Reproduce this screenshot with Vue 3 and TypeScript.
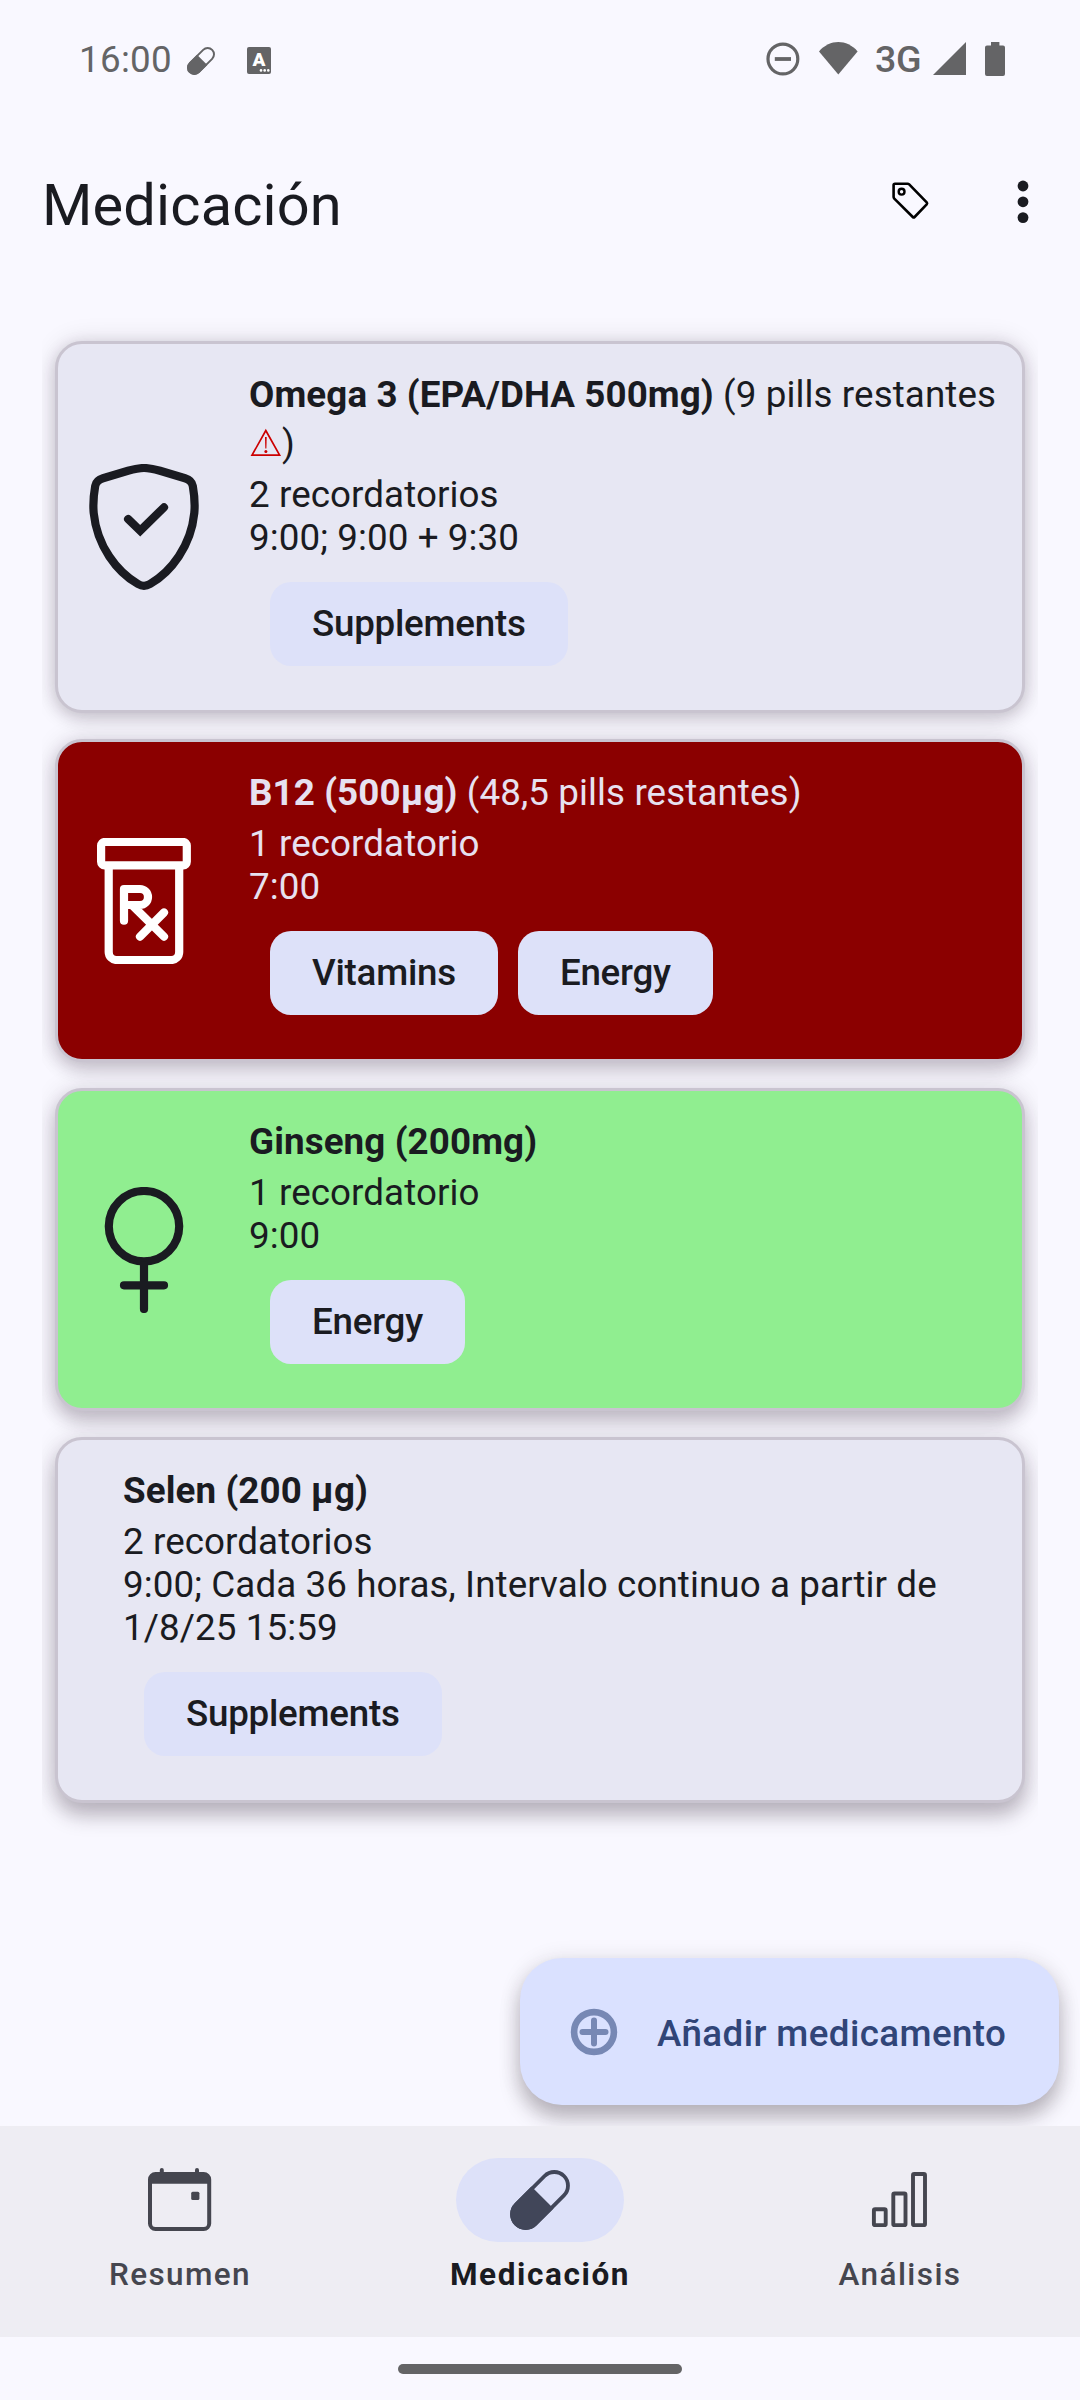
<script setup lang="ts">
type IconName = 'shield' | 'rx' | 'female'

interface Medicine {
  name: string
  stock?: string
  low?: boolean
  lines: string[]
  tags: string[]
  icon?: IconName
  theme: 'plain' | 'red' | 'green'
}

const medicines: Medicine[] = [
  {
    name: 'Omega 3 (EPA/DHA 500mg)',
    stock: '9 pills restantes',
    low: true,
    lines: ['2 recordatorios', '9:00; 9:00 + 9:30'],
    tags: ['Supplements'],
    icon: 'shield',
    theme: 'plain',
  },
  {
    name: 'B12 (500µg)',
    stock: '48,5 pills restantes',
    lines: ['1 recordatorio', '7:00'],
    tags: ['Vitamins', 'Energy'],
    icon: 'rx',
    theme: 'red',
  },
  {
    name: 'Ginseng (200mg)',
    lines: ['1 recordatorio', '9:00'],
    tags: ['Energy'],
    icon: 'female',
    theme: 'green',
  },
  {
    name: 'Selen (200 µg)',
    lines: ['2 recordatorios', '9:00; Cada 36 horas, Intervalo continuo a partir de 1/8/25 15:59'],
    tags: ['Supplements'],
    theme: 'plain',
  },
]
</script>

<template>
  <div class="screen">
    <header class="status">
      <span class="clock">16:00</span>
      <svg class="s-pill" width="28" height="28" viewBox="0 0 60 60">
        <g transform="rotate(-45 30 30)">
          <rect x="-3.8" y="16.4" width="67.6" height="27.2" rx="13.6" fill="none" stroke="#646466" stroke-width="4.2" />
          <path d="M33.5 14.4H9.8a15.6 15.6 0 0 0 0 31.2H33.5Z" fill="#646466" />
        </g>
      </svg>
      <span class="s-lang">
        <b>A</b>
        <svg width="24" height="27" viewBox="0 0 24 27" fill="#fff">
          <circle cx="14" cy="23.4" r="1.3" /><circle cx="17.7" cy="23.4" r="1.3" /><circle cx="21.3" cy="23.4" r="1.3" />
        </svg>
      </span>
      <span class="grow"></span>
      <div class="s-right">
        <svg width="96" height="36" viewBox="764 41 96 36">
          <circle cx="782.9" cy="59" r="14.9" fill="none" stroke="#646466" stroke-width="3.2" />
          <path d="M774.8 59H791" stroke="#646466" stroke-width="3.8" />
          <path d="M838.3 74.6L819 51.4C830 39 846.6 39 857.6 51.4Z" fill="#646466" />
        </svg>
        <span class="net">3G</span>
        <svg width="74" height="36" viewBox="932 41 74 36" fill="#646466">
          <path d="M966 42V75H933Z" />
          <path d="M991 42h8.4v3.6h3.6a2 2 0 0 1 2 2V74a2 2 0 0 1-2 2H987a2 2 0 0 1-2-2V47.6a2 2 0 0 1 2-2h4Z" />
        </svg>
      </div>
    </header>

    <div class="appbar">
      <h1>Medicación</h1>
      <svg class="tag-ico" width="40" height="40" viewBox="892 181 40 40" fill="none" stroke="#000">
        <path d="M896 183.7H908.5Q909.5 183.7 910.2 184.4L927.7 202.4Q928.6 203.4 927.7 204.4L915.6 217Q914.7 217.9 913.8 217L895.3 198.6Q894.6 197.9 894.6 197V185.1Q894.6 183.7 896 183.7Z" stroke-width="2.6" />
        <circle cx="902.6" cy="191.7" r="2.9" stroke-width="2.4" />
      </svg>
      <svg class="dots" width="12" height="44" viewBox="0 0 12 44" fill="#1a1b21">
        <circle cx="6" cy="6" r="5.4" /><circle cx="6" cy="21.8" r="5.4" /><circle cx="6" cy="37.6" r="5.4" />
      </svg>
    </div>

    <main class="list">
      <article v-for="(m, i) in medicines" :key="i" class="card" :class="[m.theme, 'lift' + i]">
        <svg v-if="m.icon" class="m-ico" width="126" height="126" viewBox="0 0 126 126" fill="none" stroke="currentColor" stroke-width="8.2" stroke-linecap="round" stroke-linejoin="round">
          <template v-if="m.icon === 'shield'">
            <path d="M63 4C58 4 52 5.4 47 6.8L22 14.3C17 15.8 15 18 14.2 22C12.6 31 11.9 40 12.7 49C16 82 36 108 57 120C61 122.4 65 122.4 69 120C90 108 110 82 113.3 49C114.1 40 113.4 31 111.8 22C111 18 109 15.8 104 14.3L79 6.8C74 5.4 68 4 63 4Z" />
            <path d="M47.1 55L59.2 66.7L83 43.3" stroke-linejoin="miter" />
          </template>
          <template v-else-if="m.icon === 'rx'">
            <rect x="20.1" y="4" width="85.7" height="23.3" rx="3.5" />
            <path d="M27.7 28V114a8 8 0 0 0 8 8H90.2a8 8 0 0 0 8-8V28" />
            <path d="M43 82.7V51H59a8 8 0 0 1 0 16H43M52 68L83 98.7M83 74.5L59 98.7" />
          </template>
          <template v-else>
            <circle cx="63" cy="39.2" r="35.2" />
            <path d="M63 78V122M43 98.3H83" />
          </template>
        </svg>
        <div class="body">
          <p class="name"><b>{{ m.name }}</b><template v-if="m.stock"> ({{ m.stock }}<template v-if="m.low">&#32;<svg class="warn" width="33" height="30" viewBox="0 0 33 30"><path d="M16.8 3.5L30.6 28.2H3Z" fill="none" stroke="#c00" stroke-width="1.7" /><path d="M16 10h1.7l-.3 11.5h-1.1Z" fill="#c00" /><circle cx="16.85" cy="24.5" r="1.5" fill="#c00" /></svg></template>)</template></p>
          <p v-for="l in m.lines" :key="l" class="line">{{ l }}</p>
          <div class="chips">
            <span v-for="t in m.tags" :key="t" class="chip">{{ t }}</span>
          </div>
        </div>
      </article>
    </main>

    <button class="fab" type="button">
      <svg width="48" height="48" viewBox="0 0 48 48" fill="none" stroke="#7788b4" stroke-width="6.6">
        <circle cx="24" cy="24" r="19.9" />
        <path d="M24 12.500V35.500M12.500 24H35.500" stroke-width="6" stroke-linecap="round" />
      </svg>
      <span>Añadir medicamento</span>
    </button>

    <nav class="nav">
      <a class="tab">
        <span class="ind">
          <svg width="64" height="64" viewBox="148 2168 64 64" fill="none" stroke="#45464f">
            <rect x="150" y="2174" width="59.2" height="55" rx="5.5" stroke-width="4" />
            <path d="M149 2183.7V2179a6 6 0 0 1 6-6H204a6 6 0 0 1 6 6V2183.7Z" fill="#45464f" stroke="none" />
            <path d="M161.8 2170V2175M197 2170V2175" stroke-width="4" stroke-linecap="round" />
            <rect x="191.2" y="2191.7" width="8.2" height="8.2" rx="1.5" fill="#45464f" stroke="none" />
          </svg>
        </span>
        <span class="lbl">Resumen</span>
      </a>
      <a class="tab on">
        <span class="ind">
          <svg width="60" height="60" viewBox="0 0 60 60">
            <g transform="rotate(-45 30 30)">
              <rect x="-3.9" y="16.3" width="67.8" height="27.4" rx="13.7" fill="none" stroke="#414659" stroke-width="3.8" />
              <path d="M33.5 14.4H9.8a15.6 15.6 0 0 0 0 31.2H33.5Z" fill="#414659" />
            </g>
          </svg>
        </span>
        <span class="lbl">Medicación</span>
      </a>
      <a class="tab">
        <span class="ind">
          <svg width="64" height="64" viewBox="868 2168 64 64" fill="none" stroke="#45464f" stroke-width="3.9">
            <rect x="873.9" y="2209.3" width="11.8" height="15.8" rx="1.2" />
            <rect x="893.3" y="2193.5" width="12.2" height="31.6" rx="1.2" />
            <rect x="913" y="2174" width="12" height="51.1" rx="1.2" />
          </svg>
        </span>
        <span class="lbl">Análisis</span>
      </a>
    </nav>
    <footer class="gesture"><i></i></footer>
  </div>
</template>

<style>
body {
  margin: 0;
  background: #f9f8ff;
}
</style>

<style scoped>
.screen {
  position: relative;
  width: 1080px;
  height: 2400px;
  display: flex;
  flex-direction: column;
  overflow: hidden;
  background: #f9f8ff;
  color: #1a1b21;
  font-family: Roboto, "Liberation Sans", sans-serif;
  font-size: 36.75px;
}
.status {
  height: 118px;
  box-sizing: border-box;
  padding: 0 74px 0 79px;
  display: flex;
  align-items: center;
}
.clock {
  width: 108px;
  color: #646466;
  letter-spacing: .3px;
}
.s-pill {
  margin-top: 3px;
}
.s-lang {
  position: relative;
  width: 24px;
  height: 27px;
  margin: 3px 0 0 32px;
  border-radius: 2px;
  background: #646466;
}
.s-lang b {
  position: absolute;
  left: 0;
  top: 0;
  width: 24px;
  text-align: center;
  font-size: 19px;
  line-height: 26px;
  font-weight: 900;
  color: #fff;
}
.s-lang svg {
  position: absolute;
  left: 0;
  top: 0;
}
.grow {
  flex: 1;
}
.s-right {
  display: flex;
  align-items: center;
}
.net {
  width: 57px;
  margin: 0 0 0 15px;
  line-height: 44px;
  font-size: 37.5px;
  font-weight: 500;
  letter-spacing: -.3px;
  color: #646466;
}
.appbar {
  height: 172px;
  box-sizing: border-box;
  padding: 0 51px 0 42px;
  display: flex;
  align-items: center;
}
h1 {
  margin: 2px 0 0;
  flex: 1;
  font-size: 57.75px;
  line-height: 72px;
  font-weight: 400;
  letter-spacing: .15px;
}
.tag-ico {
  margin: -6px 86px 0 0;
}
.dots {
  margin-top: -5px;
}
.list {
  margin: 0 42px;
  padding: 51px 13.5px 0;
  display: flex;
  flex-direction: column;
  gap: 26px;
  clip-path: inset(-50px 0 -60px 0);
}
.card {
  box-sizing: border-box;
  display: flex;
  align-items: center;
  margin-left: -.5px;
  border: 3px solid #c9c4d0;
  border-radius: 27px;
  background: #e7e7f3;
  padding: 26px 18px 44px 23px;
}
.lift0 { box-shadow: 0 5px 16px rgba(40, 25, 45, .2), 0 0 26px rgba(40, 25, 45, .12); }
.lift1 { box-shadow: 0 7px 17px rgba(40, 25, 45, .22), 0 0 26px rgba(40, 25, 45, .12); }
.lift2 { box-shadow: 0 10px 18px rgba(40, 25, 45, .24), 0 0 26px rgba(40, 25, 45, .12); }
.lift3 { box-shadow: 0 13px 20px rgba(40, 25, 45, .27), 0 0 26px rgba(40, 25, 45, .12); }
.red {
  background: #8b0000;
  color: #e7e1f0;
}
.red .m-ico {
  color: #fff;
}
.green {
  background: #90ee90;
}
.m-ico {
  flex: none;
  margin: 18px 42px 0 0;
}
.body {
  flex: 1;
  margin-left: 42px;
}
.m-ico + .body {
  margin-left: 0;
}
p {
  margin: 0;
}
.name {
  line-height: 49px;
  padding-bottom: 5px;
  letter-spacing: .1px;
}
.line {
  line-height: 43px;
  letter-spacing: .09px;
}
.warn {
  vertical-align: -1px;
}
.chips {
  display: flex;
  gap: 20px;
  margin: 23px 0 0 21px;
}
.chip {
  height: 84px;
  line-height: 84px;
  padding: 0 42px;
  border-radius: 21px;
  background: #dde1f9;
  color: #1a1b21;
  font-weight: 500;
  letter-spacing: -.25px;
}
.fab {
  position: absolute;
  left: 519.5px;
  top: 1958px;
  width: 539.5px;
  height: 147px;
  box-sizing: border-box;
  padding: 4px 0 0 50px;
  display: flex;
  align-items: center;
  gap: 39.5px;
  border: 0;
  border-radius: 42px;
  background: #dae1ff;
  color: #304578;
  font: 500 36.75px Roboto, sans-serif;
  letter-spacing: .4px;
  white-space: nowrap;
  box-shadow: 0 14px 20px rgba(40, 30, 40, .27), 0 2px 22px rgba(40, 30, 40, .12);
}
.fab svg {
  margin-top: -4px;
}
.nav {
  position: relative;
  margin-top: auto;
  height: 211px;
  display: flex;
  background: #eeedf3;
}
.tab {
  flex: 1;
  display: flex;
  flex-direction: column;
  align-items: center;
  padding-top: 32px;
  color: #45464f;
}
.ind {
  width: 168px;
  height: 84px;
  display: flex;
  align-items: center;
  justify-content: center;
  border-radius: 42px;
}
.on .ind {
  background: #dde1f9;
}
.lbl {
  margin-top: 12px;
  font-size: 31.5px;
  line-height: 42px;
  font-weight: 500;
  letter-spacing: 1.4px;
}
.on .lbl {
  font-weight: 700;
  letter-spacing: 1.6px;
  color: #1a1b21;
}
.gesture {
  height: 63px;
  display: flex;
  justify-content: center;
  align-items: flex-start;
}
.gesture i {
  width: 284px;
  height: 10px;
  margin-top: 27px;
  border-radius: 5px;
  background: #646466;
}
</style>
